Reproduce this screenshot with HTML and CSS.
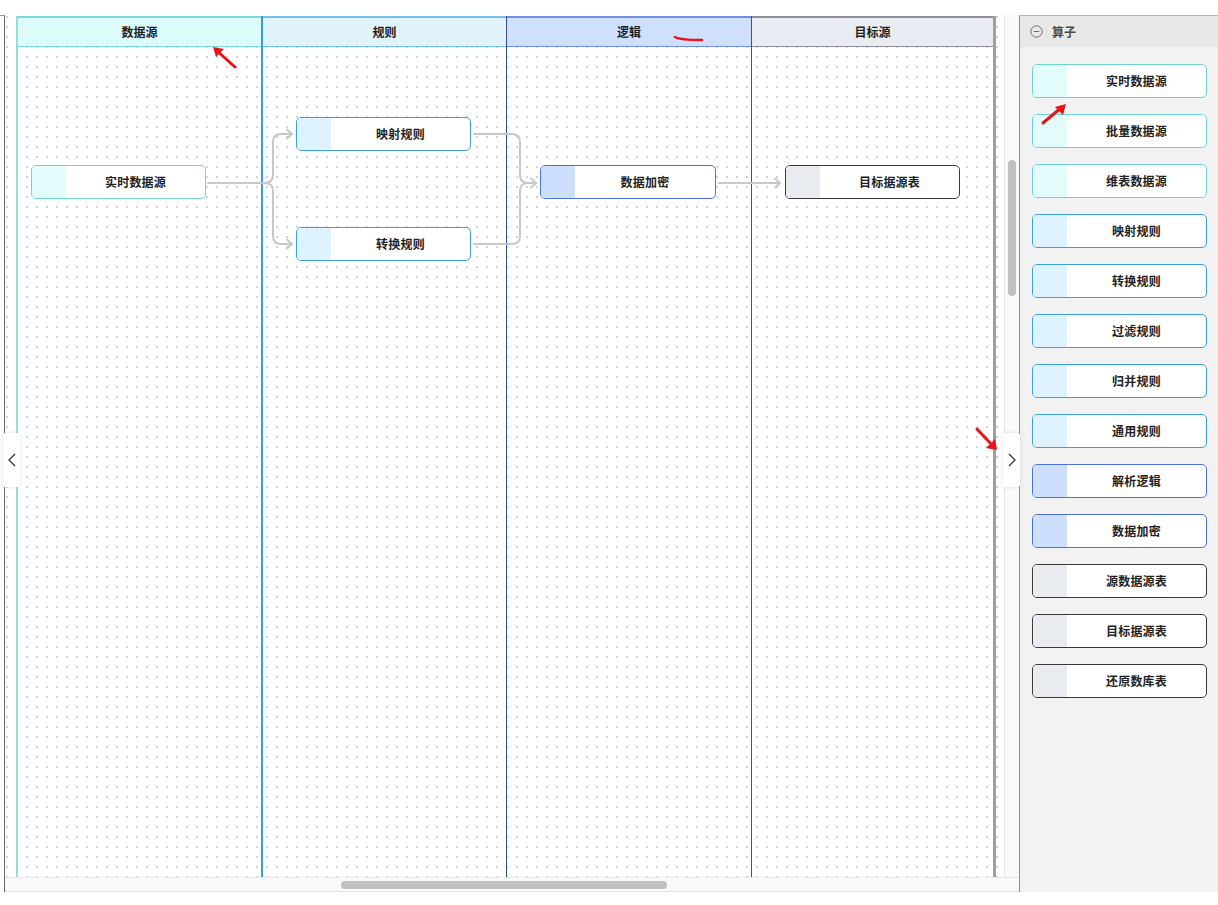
FILE: index.html
```html
<!DOCTYPE html>
<html lang="zh-CN">
<head>
<meta charset="utf-8">
<title>流程编排</title>
<link rel="stylesheet" href="styles.css">
</head>
<body>
<div class="app">
  <div class="left-rail"></div>
  <div class="canvas-wrap">
    <div class="canvas-row">
      <div class="canvas">
        <div class="lanes">
          <div class="lane lane-src"><div class="lane-head">数据源</div></div>
          <div class="lane lane-rule"><div class="lane-head">规则</div></div>
          <div class="lane lane-logic"><div class="lane-head">逻辑</div></div>
          <div class="lane lane-target"><div class="lane-head">目标源</div></div>
        </div>
        <div class="diagram">
          <svg class="edges" width="999" height="862" viewBox="0 0 999 862">
            <g fill="none" stroke="#c8c8c8" stroke-width="2" stroke-linecap="round" stroke-linejoin="round">
              <path d="M203 168 H259 Q268 168 268 160 V127 Q268 119 276 119 H287"/>
              <path d="M259 168 Q268 168 268 176 V221 Q268 229 276 229 H287"/>
              <path d="M282 114.5 L287 119 L282 123.5"/>
              <path d="M282 224.5 L287 229 L282 233.5"/>
              <path d="M469 119 H507 Q515 119 515 127 V160 Q515 168 523 168 H531"/>
              <path d="M469 229 H507 Q515 229 515 221 V176 Q515 168 523 168"/>
              <path d="M526 163.5 L531 168 L526 172.5"/>
              <path d="M714 168 H775"/>
              <path d="M770 163.5 L775 168 L770 172.5"/>
            </g>
          </svg>
          <div class="node node-src" style="left:26px;top:150px"><span class="blk"></span><span class="lbl">实时数据源</span></div>
          <div class="node node-rule" style="left:291px;top:102px"><span class="blk"></span><span class="lbl">映射规则</span></div>
          <div class="node node-rule" style="left:291px;top:212px"><span class="blk"></span><span class="lbl">转换规则</span></div>
          <div class="node node-logic" style="left:535px;top:150px"><span class="blk"></span><span class="lbl">数据加密</span></div>
          <div class="node node-target" style="left:780px;top:150px"><span class="blk"></span><span class="lbl">目标据源表</span></div>
        </div>
      </div>
      <div class="vscroll"><div class="vthumb"></div></div>
    </div>
    <div class="hscroll"><div class="hthumb"></div></div>
  </div>
  <aside class="panel">
    <div class="panel-head">
      <svg class="minus" width="13" height="13" viewBox="0 0 13 13"><circle cx="6.5" cy="6.5" r="5.7" fill="none" stroke="#6e6e6e" stroke-width="1"/><path d="M3.7 6.5 H9.3" stroke="#6e6e6e" stroke-width="1"/></svg>
      <span>算子</span>
    </div>
    <div class="panel-list">
      <div class="node item node-src"><span class="blk"></span><span class="lbl">实时数据源</span></div>
      <div class="node item node-src"><span class="blk"></span><span class="lbl">批量数据源</span></div>
      <div class="node item node-src"><span class="blk"></span><span class="lbl">维表数据源</span></div>
      <div class="node item node-rule"><span class="blk"></span><span class="lbl">映射规则</span></div>
      <div class="node item node-rule"><span class="blk"></span><span class="lbl">转换规则</span></div>
      <div class="node item node-rule"><span class="blk"></span><span class="lbl">过滤规则</span></div>
      <div class="node item node-rule"><span class="blk"></span><span class="lbl">归并规则</span></div>
      <div class="node item node-rule"><span class="blk"></span><span class="lbl">通用规则</span></div>
      <div class="node item node-logic"><span class="blk"></span><span class="lbl">解析逻辑</span></div>
      <div class="node item node-logic"><span class="blk"></span><span class="lbl">数据加密</span></div>
      <div class="node item node-target"><span class="blk"></span><span class="lbl">源数据源表</span></div>
      <div class="node item node-target"><span class="blk"></span><span class="lbl">目标据源表</span></div>
      <div class="node item node-target"><span class="blk"></span><span class="lbl">还原数库表</span></div>
    </div>
  </aside>
  <button class="toggle toggle-left"><svg width="10" height="14" viewBox="0 0 10 14"><path d="M8 1 L2 7 L8 13" fill="none" stroke="#333" stroke-width="1.3"/></svg></button>
  <button class="toggle toggle-right"><svg width="10" height="14" viewBox="0 0 10 14"><path d="M2 1 L8 7 L2 13" fill="none" stroke="#333" stroke-width="1.3"/></svg></button>
  <svg class="marks" width="1218" height="905" viewBox="0 0 1218 905">
    <g fill="none" stroke="#e8141b" stroke-width="3" stroke-linecap="round" stroke-linejoin="round">
      <path d="M235 67 L216 50"/>
      <path d="M1043 123 L1062 107"/>
      <path d="M977 429 L994 447"/>
      <path d="M675 37 Q680 40 702 40" stroke-width="2.5"/>
    </g>
    <g fill="#e8141b">
      <path d="M213 47 L224 49 L216 57 Z"/>
      <path d="M1066 104 L1063 115 L1055 107 Z"/>
      <path d="M997 450 L986 448 L995 439 Z"/>
    </g>
  </svg>
</div>
</body>
</html>
```
FILE: styles.css
```css
* { box-sizing: border-box; }
html, body { margin: 0; padding: 0; background: #fff; }
body {
  width: 1218px;
  height: 905px;
  overflow: hidden;
  font-family: "Noto Sans CJK SC", "Noto Sans", sans-serif;
  color: #222;
}
.app {
  position: relative;
  display: flex;
  padding-top: 15px;
  height: 892px;
}
.left-rail {
  width: 5px;
  border-top: 1px solid #9a9a9a;
  border-right: 1px solid #6d6d6d;
}
.canvas-wrap {
  width: 1014px;
  display: flex;
  flex-direction: column;
}
.canvas-row {
  display: flex;
  height: 862px;
}
.canvas {
  position: relative;
  width: 999px;
  height: 862px;
  padding: 1px 0 0 11px;
  background-color: #fff;
  background-image: radial-gradient(circle, #c4c4c4 0.6px, transparent 1px);
  background-size: 10px 10px;
  background-position: -3px -3px;
  overflow: hidden;
}
.lanes {
  display: grid;
  grid-template-columns: repeat(4, 245px);
  height: 861px;
}
.lane {
  border-left: 1px solid;
  display: flex;
  flex-direction: column;
}
.lane-head {
  height: 31px;
  border-top: 2px solid;
  border-bottom: 1px solid;
  padding-bottom: 1px;
  display: flex;
  align-items: center;
  justify-content: center;
  font-size: 12px;
  font-weight: 700;
  color: #1e1e1e;
}
.lane-src { border-left: 2px solid #97dcdc; }
.lane-src .lane-head { background: #dcfcfb; border-color: #7ad9d8; }
.lane-rule { border-left: 2px solid #2f9fe4; }
.lane-rule .lane-head { background: #e1f3fd; border-color: #74c0ef; }
.lane-logic { border-left-color: #34508c; }
.lane-logic .lane-head { background: #cee0fc; border-color: #6f90e4; }
.lane-target { border-left-color: #46536a; border-right: 3px solid #a0a0a0; }
.lane-target .lane-head { background: #e9ecf1; border-color: #8c9096; }

.diagram {
  position: absolute;
  inset: 0;
}
.edges {
  position: absolute;
  left: 0;
  top: 0;
}
.node {
  display: flex;
  width: 175px;
  height: 34px;
  border: 1px solid;
  border-radius: 5px;
  background: #fff;
  overflow: hidden;
}
.diagram .node { position: absolute; }
.node .blk { width: 34px; flex: none; }
.node .lbl {
  flex: 1;
  display: flex;
  align-items: center;
  justify-content: center;
  padding-bottom: 1px;
  font-size: 12px;
  font-weight: 700;
  color: #222;
  letter-spacing: 0.2px;
}
.node-src { border-color: #6dd3d3; }
.node-src .blk { background: #e1fcfb; }
.node-rule { border-color: #3b9fdf; }
.node-rule .blk { background: #def3fd; }
.node-logic { border-color: #4c71dc; }
.node-logic .blk { background: #cddffc; }
.node-target { border-color: #3a3a3a; }
.node-target .blk { background: #e8ebf0; }
.diagram .node-logic { width: 176px; }

.vscroll {
  width: 15px;
  height: 862px;
  border-left: 1px solid #e6e6e6;
  background: #fafafa;
  padding: 145px 0 0 3px;
}
.vthumb {
  width: 8px;
  height: 136px;
  border-radius: 4px;
  background: #c1c1c1;
}
.hscroll {
  height: 15px;
  border-top: 1px solid #e6e6e6;
  border-bottom: 1px solid #e2e2e2;
  background: #fafafa;
  padding: 3px 0 0 336px;
}
.hthumb {
  width: 326px;
  height: 8px;
  border-radius: 4px;
  background: #c1c1c1;
}

.panel {
  width: 199px;
  height: 877px;
  background: #f2f2f2;
  border-left: 1px solid #8e8e8e;
  border-top: 1px solid #b5b5b5;
}
.panel-head {
  height: 31px;
  background: #e8e8e8;
  display: flex;
  align-items: center;
  gap: 9px;
  padding-left: 10px;
  padding-bottom: 1px;
  font-size: 12px;
  font-weight: 700;
  color: #4a4a4a;
}
.panel-head .minus { flex: none; }
.panel-list {
  display: flex;
  flex-direction: column;
  gap: 16px;
  padding: 17px 0 0 12px;
}

.toggle {
  position: absolute;
  top: 433px;
  width: 17px;
  height: 54px;
  border: none;
  padding: 0;
  background: #fff;
  box-shadow: 0 0 4px rgba(0,0,0,0.12);
  display: flex;
  align-items: center;
  justify-content: center;
  border-radius: 2px;
}
.toggle-left { left: 3px; }
.toggle-right { left: 1003px; }
.marks {
  position: absolute;
  left: 0;
  top: 0;
  pointer-events: none;
}
```
